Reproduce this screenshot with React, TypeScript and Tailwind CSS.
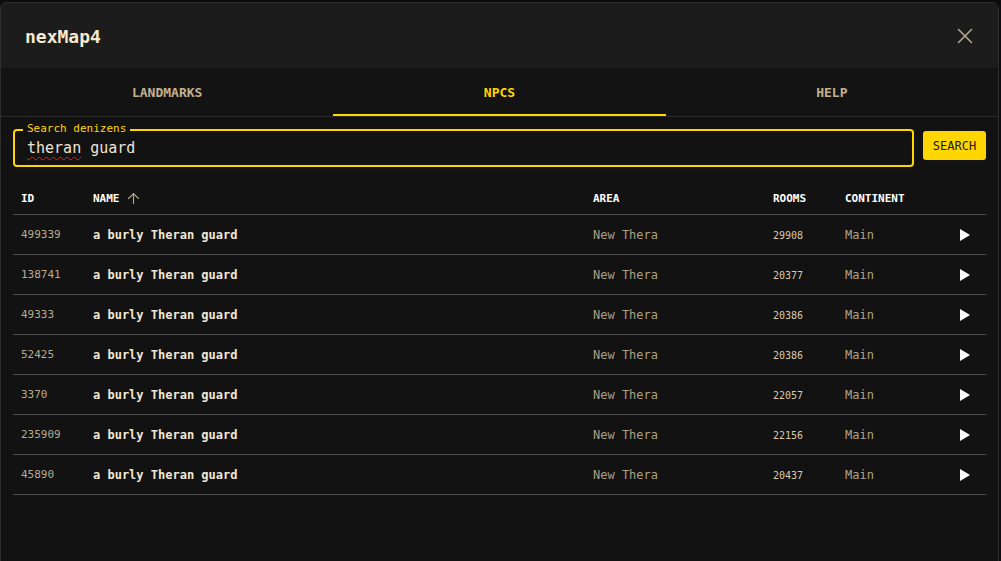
import { ArrowUp, X } from 'lucide-react';

type Npc = {
  id: string;
  name: string;
  area: string;
  room: string;
  continent: string;
};

const ROWS: Npc[] = [
  { id: '499339', name: 'a burly Theran guard', area: 'New Thera', room: '29908', continent: 'Main' },
  { id: '138741', name: 'a burly Theran guard', area: 'New Thera', room: '20377', continent: 'Main' },
  { id: '49333', name: 'a burly Theran guard', area: 'New Thera', room: '20386', continent: 'Main' },
  { id: '52425', name: 'a burly Theran guard', area: 'New Thera', room: '20386', continent: 'Main' },
  { id: '3370', name: 'a burly Theran guard', area: 'New Thera', room: '22057', continent: 'Main' },
  { id: '235909', name: 'a burly Theran guard', area: 'New Thera', room: '22156', continent: 'Main' },
  { id: '45890', name: 'a burly Theran guard', area: 'New Thera', room: '20437', continent: 'Main' },
];

const GRID = 'grid grid-cols-[72px_500px_180px_72px_103px_47px]';

function PlayIcon(): React.ReactElement {
  return (
    <svg width="10" height="12" viewBox="0 0 10 12" className="block">
      <polygon points="0,0 10,6 0,12" fill="#ffffff" />
    </svg>
  );
}

export default function App(): React.ReactElement {
  return (
    <div
      className="h-[561px] overflow-hidden bg-[#0c0c10] pt-[2px]"
      style={{ fontFamily: '"DejaVu Sans Mono", "Liberation Mono", monospace' }}
    >
      <div className="flex h-[600px] w-[999px] flex-col overflow-hidden rounded-[6px] border border-[#2e2e2e] bg-[#121212]">
        <header className="flex h-[65px] shrink-0 items-center justify-between bg-[#1c1c1c] pl-[24px] pr-[20px]">
          <h1 className="pt-[1px] text-[18px] font-bold text-[#f5e9cf]">nexMap4</h1>
          <X size={26} strokeWidth={1.5} color="#b6a88d" />
        </header>

        <nav className="grid h-[49px] shrink-0 grid-cols-3 border-b border-[#2c2c2c] bg-[#131313]">
          <div className="flex items-center justify-center pt-[2px] text-[13px] font-bold text-[#c3b08f]">
            LANDMARKS
          </div>
          <div className="flex items-center justify-center border-b-2 border-[#ffd600] pt-[4px] text-[13px] font-bold text-[#ffd600]">
            NPCS
          </div>
          <div className="flex items-center justify-center pt-[2px] text-[13px] font-bold text-[#c3b08f]">
            HELP
          </div>
        </nav>

        <div className="px-[12px]">
          <div className="mt-[12px] flex items-start gap-[9px]">
            <div className="relative flex h-[38px] flex-1 items-center rounded-[4px] border-2 border-[#ffd600] pl-[12px] pt-[1px]">
              <span className="absolute left-[8px] top-[-10px] bg-[#121212] px-[4px] text-[11px] leading-[16px] text-[#ffd600]">
                Search denizens
              </span>
              <span className="text-[15px] text-[#efe5d0]">
                <span className="underline decoration-[#d22] decoration-wavy decoration-1 underline-offset-[3px]">
                  theran
                </span>{' '}
                guard
              </span>
            </div>
            <button className="mt-[2px] flex h-[29px] w-[63px] items-center justify-center rounded-[3px] bg-[#ffd600] text-[12px] text-[#1a1a1a]">
              SEARCH
            </button>
          </div>

          <div className="mt-[13px]">
            <div className={`${GRID} h-[35px] items-center border-b border-[#4b4b4b] pt-[4px] text-[11px] font-bold text-white`}>
              <div className="pl-[8px]">ID</div>
              <div className="flex items-center gap-[5px] pl-[8px]">
                NAME <ArrowUp size={17} strokeWidth={1.6} color="#b6a88d" className="mt-[-2px]" />
              </div>
              <div className="pl-[8px]">AREA</div>
              <div className="pl-[8px]">ROOMS</div>
              <div className="pl-[8px]">CONTINENT</div>
              <div />
            </div>
            {ROWS.map((row) => (
              <div key={row.id} className={`${GRID} h-[40px] items-center border-b border-[#4b4b4b] pt-[1px]`}>
                <div className="pt-[1px] pl-[8px] text-[11px] text-[#b9ac91]">{row.id}</div>
                <div className="pl-[8px] text-[12px] font-bold text-[#f2e8d4]">{row.name}</div>
                <div className="pl-[8px] text-[12px] text-[#ad9f84]">{row.area}</div>
                <div className="pt-[1px] pl-[8px] text-[10px] text-[#d6cab1]">{row.room}</div>
                <div className="pl-[8px] text-[12px] text-[#b1a388]">{row.continent}</div>
                <div className="flex justify-center pl-[2px]">
                  <PlayIcon />
                </div>
              </div>
            ))}
          </div>
        </div>
      </div>
    </div>
  );
}
